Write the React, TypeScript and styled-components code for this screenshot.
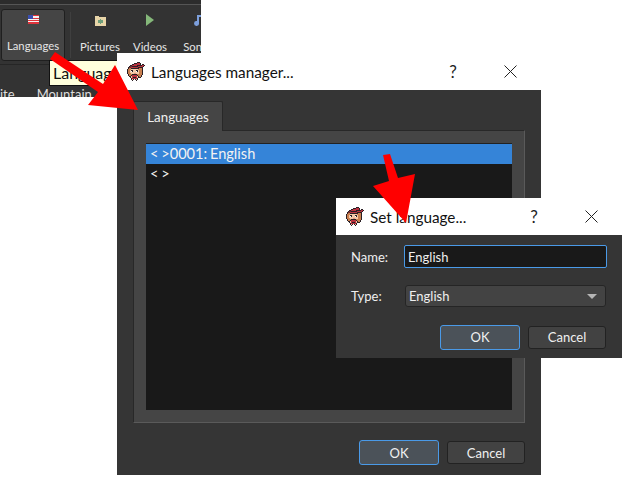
import React from 'react';
import styled, { createGlobalStyle } from 'styled-components';

const GlobalStyle = createGlobalStyle`
  html, body {
    margin: 0;
    padding: 0;
    background: #fff;
  }
  * {
    box-sizing: border-box;
  }
`;

const Canvas = styled.div`
  position: relative;
  width: 626px;
  height: 486px;
  overflow: hidden;
  background: #fff;
  font-family: 'Lato', 'Noto Sans', sans-serif;
`;

const MainWindow = styled.div<{ $x: number; $y: number; $w: number; $h: number }>`
  position: absolute;
  left: ${(p) => p.$x}px;
  top: ${(p) => p.$y}px;
  width: ${(p) => p.$w}px;
  height: ${(p) => p.$h}px;
  display: flex;
  flex-direction: column;
  background: #353535;
`;

const AppBar = styled.div`
  position: absolute;
  left: 0;
  top: 0;
  width: 201px;
  height: 97px;
  background: #333333;
  color: #e6e6e6;
  font-size: 11.3px;
  display: flex;
  flex-direction: column;
  overflow: hidden;
`;

const TopEdge = styled.div`
  flex: none;
  height: 5px;
  background: #2c2c2c;
  border-bottom: 1px solid #555;
`;

const ToolRow = styled.div`
  flex: none;
  height: 60px;
  padding: 4px 0 0 1px;
  display: flex;
  align-items: stretch;
  border-bottom: 1px solid #262626;
  overflow: hidden;
`;

const ToolButton = styled.div<{ $active?: boolean; $w: number }>`
  flex: none;
  width: ${(p) => p.$w}px;
  height: 52px;
  display: flex;
  flex-direction: column;
  align-items: center;
  justify-content: space-between;
  padding: 5px 0 8px;
  white-space: nowrap;
  border-radius: 3px;
  ${(p) => p.$active && 'background: #454545; border: 1px solid #1f1f1f;'}
`;

const ToolSep = styled.div`
  flex: none;
  width: 1px;
  height: 46px;
  margin: 3px 9px 0 5px;
  background: #3f3f3f;
`;

const TabStrip = styled.div`
  padding: 22px 0 0 0;
  display: flex;
  gap: 22px;
  white-space: nowrap;
  font-size: 13px;
  line-height: 14px;
  color: #ddd;
`;

const Tooltip = styled.div`
  position: absolute;
  left: 49px;
  top: 60px;
  width: 72px;
  height: 26px;
  padding: 2px 0 0 3px;
  background: #ffffdc;
  border: 1px solid #111;
  font-size: 16px;
  color: #111;
  overflow: hidden;
  white-space: nowrap;
`;

const TitleBar = styled.div<{ $h: number }>`
  flex: none;
  height: ${(p) => p.$h}px;
  display: flex;
  align-items: center;
  padding: 0 10px 0 10px;
  background: #fff;
  color: #111;
  font-size: 15.3px;
`;

const TitleText = styled.span`
  margin-left: 6px;
  flex: 1;
  white-space: nowrap;
`;

const HelpMark = styled.span`
  width: 16px;
  text-align: center;
  font-size: 17px;
  color: #222;
`;

const CloseBox = styled.span`
  display: flex;
  margin: 0 14px 0 43px;
`;

const Body = styled.div`
  flex: 1;
  display: flex;
  flex-direction: column;
  padding: 11px 16px 10px;
  min-height: 0;
`;

const Tab = styled.div`
  width: 90px;
  height: 30px;
  margin-bottom: -1px;
  position: relative;
  z-index: 1;
  padding-top: 7px;
  text-align: center;
  font-size: 13.3px;
  color: #f0f0f0;
  background: #454545;
  border: 1px solid #282828;
  border-bottom: none;
  border-radius: 2px 2px 0 0;
`;

const TabPane = styled.div`
  height: 294px;
  padding: 12px;
  background: #454545;
  border: 1px solid #282828;
  border-right-color: #5a5a5a;
  border-bottom-color: #5a5a5a;
`;

const ListBox = styled.div`
  height: 100%;
  background: #191919;
  color: #f2f2f2;
  font-size: 14.6px;
  line-height: 20px;
  border-top: 1px solid #222;
`;

const ListRow = styled.div<{ $selected?: boolean }>`
  height: 20px;
  padding-left: 4px;
  word-spacing: -1px;
  background: ${(p) => (p.$selected ? '#3584d8' : 'transparent')};
`;

const ButtonRow = styled.div`
  margin-top: 17px;
  display: flex;
  justify-content: flex-end;
  align-items: center;
  gap: 8px;
`;

const Button = styled.div<{ $primary?: boolean }>`
  display: flex;
  align-items: center;
  justify-content: center;
  color: #f0f0f0;
  font-size: 13px;
  border-radius: 3px;
  ${(p) =>
    p.$primary
      ? `width: 80px; height: 25px; background: #4b5259; border: 1px solid #4a9ae8;`
      : `width: 78px; height: 23px; background: #424242; border: 1px solid #222;`}
`;

const DialogBody = styled.div`
  flex: 1;
  display: grid;
  grid-template-columns: 53px 1fr;
  grid-template-rows: 23px 22px 26px;
  row-gap: 17px;
  align-items: center;
  padding: 10px 15px 0;
  font-size: 13px;
  color: #efefef;
`;

const NameLabel = styled.span`
  padding-top: 1px;
`;

const NameInput = styled.div`
  height: 23px;
  padding-left: 3px;
  line-height: 23px;
  background: #191919;
  border: 1px solid #4a9ae8;
  border-radius: 2px;
`;

const TypeSelect = styled.div`
  height: 22px;
  margin: 0 1px;
  padding: 0 8px 0 3px;
  display: flex;
  align-items: center;
  justify-content: space-between;
  background: #434343;
  border: 1px solid #252525;
  border-radius: 3px;
`;

const Caret = styled.span`
  width: 0;
  height: 0;
  border-left: 5px solid transparent;
  border-right: 5px solid transparent;
  border-top: 5px solid #b5b5b5;
`;

const DialogButtons = styled.div`
  grid-column: 1 / 3;
  display: flex;
  justify-content: flex-end;
  align-items: center;
  gap: 8px;
  padding-right: 1px;
`;

const ArrowLayer = styled.svg`
  position: absolute;
  left: 0;
  top: 0;
  z-index: 5;
  pointer-events: none;
`;

const spriteRows = [
  '..........kkk.....',
  '.......kkkrrrk....',
  '.....kkrrrrrrk.kk.',
  '...kkrrrrrkkkkkrrk',
  '..kddkkkkkkrrrrrk.',
  '.kddrrrrrrrkkkkk..',
  '.kookkkkkkkkoook..',
  'kooopppppppooook..',
  'koopkkpppkkpoook..',
  'koopwkpppwkpoook..',
  'koopppppppppoook..',
  'kooopppsspppoook..',
  '.koookkkkkoooook..',
  '.kookrrrrrkoook...',
  '..kkprrrrrpkook...',
  '...kprkkkrpkkk....',
  '....krrrrrk.......',
  '....kpk.kpk.......',
  '.....k...k........',
];

const spriteColors: Record<string, string> = {
  k: '#2a2025',
  r: '#b8323f',
  d: '#6e2a30',
  o: '#c97f4f',
  p: '#f3c9a8',
  w: '#ffffff',
  s: '#e08f80',
};

const Sprite = () => (
  <svg width="18" height="19" viewBox="0 0 18 19" shapeRendering="crispEdges">
    {spriteRows.map((row, y) =>
      row.split('').map((c, x) =>
        c === '.' ? null : (
          <rect key={`${x}-${y}`} x={x} y={y} width="1" height="1" fill={spriteColors[c]} />
        )
      )
    )}
  </svg>
);

const CloseIcon = () => (
  <svg width="13" height="13" viewBox="0 0 13 13">
    <path d="M0.5 0.5 L12.5 12.5 M12.5 0.5 L0.5 12.5" stroke="#222" strokeWidth="1" />
  </svg>
);

const FlagIcon = () => (
  <svg width="11" height="9" viewBox="0 0 11 9" shapeRendering="crispEdges">
    <rect width="11" height="9" fill="#f4f4f4" />
    <rect y="0" width="11" height="1" fill="#e0343c" />
    <rect y="3" width="11" height="1" fill="#e0343c" />
    <rect y="5" width="11" height="1" fill="#e0343c" />
    <rect y="7" width="11" height="2" fill="#e0343c" />
    <rect width="5" height="4" fill="#3a4fb0" />
  </svg>
);

const PictureIcon = () => (
  <svg width="11" height="12" viewBox="0 -2 11 12" shapeRendering="crispEdges">
    <rect y="1" width="11" height="9" fill="#e8d5a8" />
    <rect width="4" height="1" fill="#e8d5a8" />
    <rect x="3" y="4" width="5" height="3" fill="#6f9f7a" />
    <rect x="5" y="3" width="1" height="5" fill="#6f9f7a" />
  </svg>
);

const PlayIcon = () => (
  <svg width="8" height="12" viewBox="0 0 8 12">
    <path d="M0 0 L8 6 L0 12 Z" fill="#85b87a" />
  </svg>
);

const NoteIcon = () => (
  <svg width="9" height="12" viewBox="0 0 9 12">
    <path d="M3 1 H8 V3 H5 V9 A2.5 2.5 0 1 1 3 7 Z" fill="#7c9fdc" />
  </svg>
);

export default function App() {
  return (
    <Canvas>
      <GlobalStyle />
      <AppBar>
        <TopEdge />
        <ToolRow>
          <ToolButton $active $w={64}>
            <FlagIcon />
            <span>Languages</span>
          </ToolButton>
          <ToolSep />
          <ToolButton $w={40}>
            <PictureIcon />
            <span>Pictures</span>
          </ToolButton>
          <ToolButton $w={60}>
            <PlayIcon />
            <span>Videos</span>
          </ToolButton>
          <ToolButton $w={36}>
            <NoteIcon />
            <span>Songs</span>
          </ToolButton>
        </ToolRow>
        <TabStrip>
          <span>ite</span>
          <span>Mountain</span>
        </TabStrip>
      </AppBar>
      <Tooltip>Languages</Tooltip>

      <MainWindow $x={117} $y={53} $w={424} $h={422}>
        <TitleBar $h={37}>
          <Sprite />
          <TitleText>Languages manager...</TitleText>
          <HelpMark>?</HelpMark>
          <CloseBox>
            <CloseIcon />
          </CloseBox>
        </TitleBar>
        <Body>
          <Tab>Languages</Tab>
          <TabPane>
            <ListBox>
              <ListRow $selected>&lt; &gt;0001: English</ListRow>
              <ListRow>&lt; &gt;</ListRow>
            </ListBox>
          </TabPane>
          <ButtonRow>
            <Button $primary>OK</Button>
            <Button>Cancel</Button>
          </ButtonRow>
        </Body>
      </MainWindow>

      <MainWindow $x={336} $y={198} $w={286} $h={160}>
        <TitleBar $h={37}>
          <Sprite />
          <TitleText>Set language...</TitleText>
          <HelpMark>?</HelpMark>
          <CloseBox>
            <CloseIcon />
          </CloseBox>
        </TitleBar>
        <DialogBody>
          <NameLabel>Name:</NameLabel>
          <NameInput>English</NameInput>
          <span>Type:</span>
          <TypeSelect>
            <span>English</span>
            <Caret />
          </TypeSelect>
          <DialogButtons>
            <Button $primary>OK</Button>
            <Button>Cancel</Button>
          </DialogButtons>
        </DialogBody>
      </MainWindow>

      <ArrowLayer width="626" height="486">
        <polygon fill="#ff0000" points="55,52 103,84 115,65 138,110 88,105 98,92 50,59" />
        <polygon fill="#ff0000" points="383,155 390,154 398,178 415,174 406,223 373,186 389,181" />
      </ArrowLayer>
    </Canvas>
  );
}
